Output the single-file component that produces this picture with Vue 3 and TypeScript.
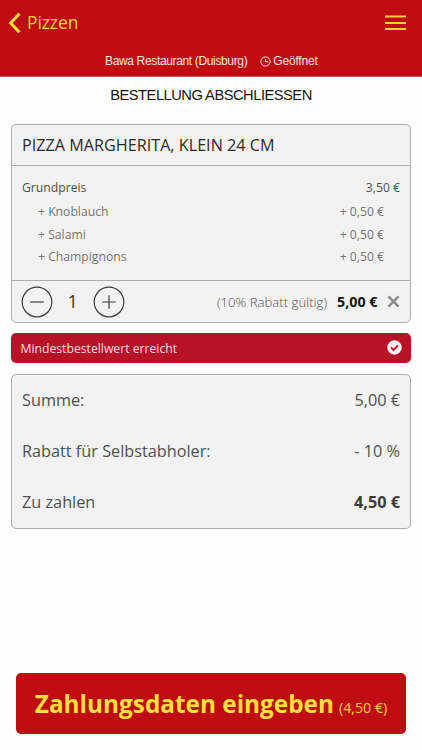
<script setup lang="ts">
import { ref, computed } from 'vue'

interface Extra {
  name: string
  price: number
}

const extras: Extra[] = [
  { name: 'Knoblauch', price: 0.5 },
  { name: 'Salami', price: 0.5 },
  { name: 'Champignons', price: 0.5 },
]
const basePrice = 3.5
const discount = 10
const quantity = ref(1)

const total = computed(
  () => quantity.value * (basePrice + extras.reduce((sum, e) => sum + e.price, 0)),
)
const payable = computed(() => total.value * (1 - discount / 100))

function euro(value: number): string {
  return value.toFixed(2).replace('.', ',') + ' €'
}
</script>

<template>
  <div class="page">
    <header class="header">
      <div class="nav">
        <a class="back">
          <svg class="chevron" width="13" height="22" viewBox="0 0 13 22">
            <path d="M11.4 1.8 2.6 11l8.8 9.2" fill="none" stroke="currentColor" stroke-width="3" />
          </svg>
          <span class="back-label">Pizzen</span>
        </a>
        <svg class="menu" width="21" height="16" viewBox="0 0 21 16">
          <path d="M0 1.5h21M0 8h21M0 14h21" stroke="currentColor" stroke-width="2" />
        </svg>
      </div>
      <div class="info">
        <span class="restaurant">Bawa Restaurant (Duisburg)</span>
        <svg class="clock" width="11" height="11" viewBox="0 0 11 11">
          <circle cx="5.5" cy="5.5" r="4.6" fill="none" stroke="currentColor" />
          <path d="M5.5 2.8v3h2.9" fill="none" stroke="currentColor" />
        </svg>
        <span class="open">Geöffnet</span>
      </div>
    </header>

    <h1 class="title">BESTELLUNG ABSCHLIESSEN</h1>

    <section class="card item">
      <h2 class="item-name"><span>PIZZA MARGHERITA, KLEIN 24 CM</span></h2>
      <div class="details">
        <div class="row base">
          <span>Grundpreis</span>
          <span>{{ euro(basePrice) }}</span>
        </div>
        <div v-for="extra in extras" :key="extra.name" class="row extra">
          <span>+ {{ extra.name }}</span>
          <span>+ {{ euro(extra.price) }}</span>
        </div>
      </div>
      <div class="controls">
        <button class="round" aria-label="Weniger" @click="quantity = Math.max(1, quantity - 1)">
          <svg width="32" height="32" viewBox="0 0 32 32">
            <circle cx="16" cy="16" r="14.8" />
            <path d="M9.2 16h13.6" />
          </svg>
        </button>
        <span class="quantity">{{ quantity }}</span>
        <button class="round" aria-label="Mehr" @click="quantity++">
          <svg width="32" height="32" viewBox="0 0 32 32">
            <circle cx="16" cy="16" r="14.8" />
            <path d="M9.2 16h13.6M16 9.2v13.6" />
          </svg>
        </button>
        <span class="hint">({{ discount }}% Rabatt gültig)</span>
        <strong class="price">{{ euro(total) }}</strong>
        <svg class="remove" width="13" height="13" viewBox="0 0 13 13">
          <path d="M1.4 1.4l10.2 10.2M11.6 1.4 1.4 11.6" stroke="currentColor" stroke-width="2.5" />
        </svg>
      </div>
    </section>

    <div class="notice">
      <span>Mindestbestellwert erreicht</span>
      <svg width="15" height="15" viewBox="0 0 15 15">
        <circle cx="7.5" cy="7.5" r="7.2" fill="#fff2f4" />
        <path d="M4 7.4l2.6 2.6L11 5.4" fill="none" stroke="#b81229" stroke-width="2" />
      </svg>
    </div>

    <section class="card summary">
      <div class="sum-row"><span>Summe:</span><span>{{ euro(total) }}</span></div>
      <div class="sum-row">
        <span>Rabatt für Selbstabholer:</span><span>- {{ discount }} %</span>
      </div>
      <div class="sum-row"><span>Zu zahlen</span><strong>{{ euro(payable) }}</strong></div>
    </section>

    <button class="checkout">
      <span class="checkout-label">Zahlungsdaten eingeben</span>
      <span class="checkout-price">({{ euro(payable) }})</span>
    </button>
  </div>
</template>

<style>
body {
  background: #fff;
}
</style>

<style scoped>
.page {
  display: flex;
  flex-direction: column;
  box-sizing: border-box;
  width: 422px;
  height: 750px;
  padding-bottom: 16px;
  overflow: hidden;
  background: #fefefe;
  font-family: 'Open Sans', sans-serif;
  color: #505050;
}
h1,
h2 {
  margin: 0;
  font-weight: 400;
}
button {
  padding: 0;
  border: 0;
  font-family: inherit;
  cursor: pointer;
}
svg {
  display: block;
  flex: none;
}
.header {
  box-sizing: border-box;
  height: 77px;
  flex: none;
  border-bottom: 1px solid #d0575b;
  background: #be0c11;
}
.nav {
  display: flex;
  align-items: center;
  justify-content: space-between;
  height: 46px;
  padding: 0 16px 0 8px;
  color: #fbd536;
}
.back {
  display: flex;
  align-items: center;
  gap: 6px;
}
.chevron {
  color: #ffe03a;
}
.back-label {
  font-size: 17.3px;
  line-height: 24px;
}
.info {
  display: flex;
  align-items: center;
  height: 30px;
  padding-left: 105px;
  font-family: 'Liberation Sans', sans-serif;
  font-size: 12px;
  line-height: 16px;
  color: #fde4e4;
}
.restaurant {
  letter-spacing: -0.35px;
}
.open {
  letter-spacing: -0.2px;
}
.clock {
  margin: 0 2.5px 0 12.5px;
}
.title {
  padding-top: 8px;
  height: 39px;
  font-family: 'Liberation Sans', sans-serif;
  font-size: 14.7px;
  line-height: 20px;
  letter-spacing: -0.5px;
  text-align: center;
  color: #161616;
}
.card {
  flex: none;
  box-sizing: border-box;
  margin: 0 11px;
  border: 1px solid #b0abad;
  border-radius: 5px;
  background: #f2f2f2;
}
.item {
  height: 199px;
}
.item-name {
  display: flex;
  align-items: center;
  height: 40px;
  padding-left: 10px;
  border-bottom: 1px solid #b0abad;
  font-size: 16.2px;
  color: #2c2c2c;
}
.details {
  box-sizing: border-box;
  height: 115px;
  padding: 11px 10px 0;
  border-bottom: 1px solid #b0abad;
}
.row {
  display: flex;
  justify-content: space-between;
  font-size: 12.2px;
}
.base {
  height: 25.4px;
  line-height: 22px;
}
.extra {
  height: 22.4px;
  padding: 0 16px;
  line-height: 20px;
  color: #747474;
}
.controls {
  display: flex;
  align-items: center;
  height: 41px;
  padding: 0 10px 0 9px;
}
.round {
  background: none;
}
.round svg {
  fill: none;
  stroke: #3c3c3c;
  stroke-width: 1.2;
}
.quantity {
  width: 39.5px;
  text-align: center;
  font-size: 17.3px;
  color: #303030;
}
.hint {
  margin-left: auto;
  font-size: 13.2px;
  font-weight: 300;
}
.price {
  margin: 0 9.5px 0 10px;
  font-size: 14.3px;
  color: #161616;
}
.remove {
  color: #8c8c8c;
}
.notice {
  display: flex;
  align-items: center;
  justify-content: space-between;
  flex: none;
  box-sizing: border-box;
  height: 30px;
  margin: 10px 11px 11px;
  padding: 0 9.5px;
  border-radius: 5px;
  background: #b81229;
  font-size: 12.2px;
  color: #ffdde1;
}
.notice svg {
  margin-bottom: 1px;
}
.summary {
  height: 155px;
  padding: 0 10px;
}
.sum-row {
  display: flex;
  align-items: center;
  justify-content: space-between;
  box-sizing: border-box;
  height: 51px;
  padding-bottom: 2px;
  font-size: 16.25px;
}
.sum-row strong {
  color: #3b3b3b;
}
.checkout {
  display: flex;
  align-items: baseline;
  justify-content: center;
  flex: none;
  height: 61px;
  margin: auto 16px 0;
  border-radius: 5px;
  background: #be0c11;
  line-height: 61px;
  color: #ffdf3b;
}
.checkout-label {
  font-size: 24.35px;
  font-weight: 700;
}
.checkout-price {
  margin-left: 5px;
  font-size: 14.2px;
  color: #fbd536;
}
</style>
